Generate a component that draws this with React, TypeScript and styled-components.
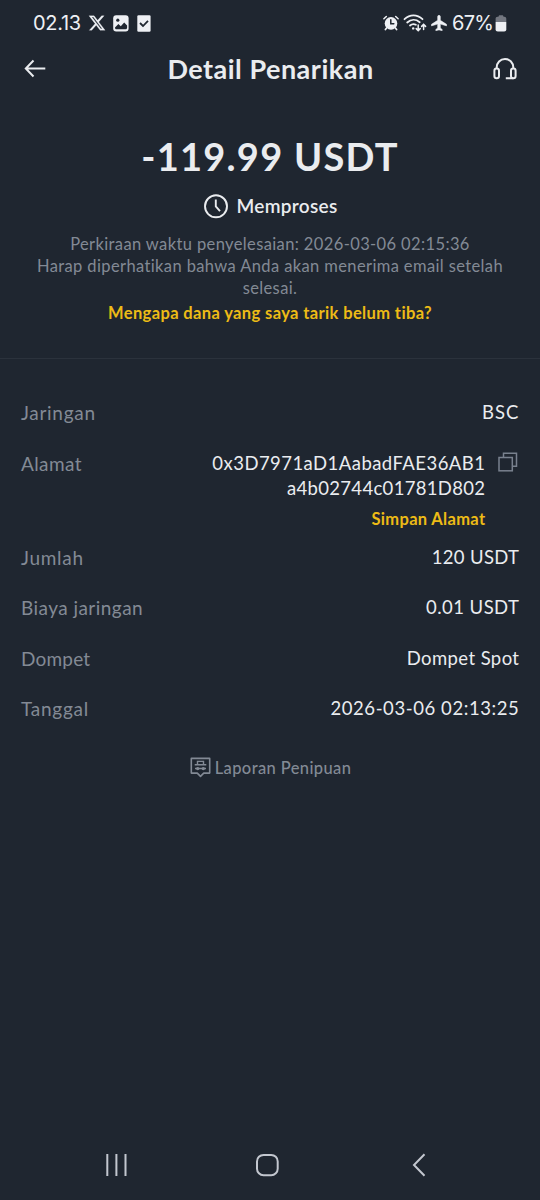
import React from "react";
import styled, { createGlobalStyle } from "styled-components";

const GlobalStyle = createGlobalStyle`
  *, *::before, *::after { box-sizing: border-box; }
  html, body { margin: 0; padding: 0; background: #1f2630; }
  svg { display: block; flex: none; }
`;

const Screen = styled.main`
  display: flex;
  flex-direction: column;
  width: 540px;
  height: 1200px;
  overflow: hidden;
  background: #1f2630;
  color: #eaecef;
  font-family: Lato, "Open Sans", sans-serif;
  font-variant-ligatures: none;
`;

const StatusBar = styled.div`
  display: flex;
  justify-content: space-between;
  align-items: center;
  height: 46px;
  padding: 0 33px 0 33px;
  font-family: Inter, Roboto, sans-serif;
  font-size: 20px;
  line-height: 24px;
  color: #eef0f4;
`;

const StatusGroup = styled.div<{ $gap: number }>`
  display: flex;
  align-items: center;
  gap: ${(p) => p.$gap}px;
`;

const Clock = styled.span`
  letter-spacing: -0.3px;
`;

const BatteryLevel = styled.span`
  margin: 0 -2px 0 1px;
  letter-spacing: -0.8px;
`;

const Header = styled.header`
  display: grid;
  grid-template-columns: 24px 1fr 26px;
  align-items: center;
  height: 46px;
  padding: 0 22px 0 23px;
`;

const IconButton = styled.button`
  display: flex;
  justify-content: center;
  padding: 0;
  border: 0;
  background: none;
  color: inherit;
`;

const Title = styled.h1`
  margin: 0;
  padding-left: 2px;
  text-align: center;
  font-size: 27px;
  line-height: 34px;
  font-weight: 700;
  letter-spacing: 0.5px;
`;

const Summary = styled.section`
  display: flex;
  flex-direction: column;
  align-items: center;
  height: 267px;
  padding: 41px 20px 0;
  border-bottom: 1px solid #2b323c;
`;

const Amount = styled.div`
  font-size: 38px;
  line-height: 46px;
  font-weight: 700;
  letter-spacing: 1.25px;
`;

const Status = styled.div`
  display: flex;
  align-items: center;
  gap: 7px;
  margin-top: 14px;
  padding-left: 1px;
  font-size: 19px;
  line-height: 26px;
  font-weight: 600;
  letter-spacing: 0.3px;
`;

const Note = styled.p`
  width: 490px;
  margin: 14px 0 0;
  text-align: center;
  font-size: 16.5px;
  line-height: 22px;
  letter-spacing: 0.38px;
  color: #838a95;
`;

const HelpLink = styled.a`
  margin-top: 3px;
  font-size: 16.5px;
  line-height: 22px;
  font-weight: 700;
  letter-spacing: 0.38px;
  color: #edbb16;
`;

const Details = styled.dl`
  display: flex;
  flex-direction: column;
  gap: 25.3px;
  margin: 0;
  padding: 41.4px 20.6px 0 21px;
  font-size: 18.5px;
  line-height: 25.3px;
`;

const Row = styled.div`
  display: flex;
  justify-content: space-between;
`;

const Label = styled.dt<{ $tracking: number }>`
  font-size: 19px;
  letter-spacing: ${(p) => p.$tracking}px;
  color: #838a95;
`;

const Value = styled.dd<{ $tracking: number }>`
  margin: 0;
  text-align: right;
  letter-spacing: ${(p) => p.$tracking}px;
`;

const AddressRow = styled(Row)`
  height: 68.4px;
`;

const AddressValue = styled.dd`
  display: flex;
  gap: 13px;
  margin: 0;
`;

const AddressColumn = styled.div`
  display: flex;
  flex-direction: column;
  align-items: flex-end;
`;

const AddressLine = styled.span<{ $tracking: number }>`
  letter-spacing: ${(p) => p.$tracking}px;
`;

const SaveLink = styled.a`
  margin-top: 6px;
  font-size: 16.5px;
  line-height: 22px;
  font-weight: 700;
  letter-spacing: 0.33px;
  color: #edbb16;
`;

const CopySlot = styled.span`
  width: 21px;
  padding-top: 1px;
`;

const Report = styled.button`
  display: flex;
  align-items: center;
  align-self: center;
  gap: 4px;
  margin: 35px 0 0 1px;
  padding: 0;
  border: 0;
  background: none;
  color: #838a95;
  font: 500 16.5px/22px Lato, "Open Sans", sans-serif;
  letter-spacing: 0.38px;
`;

const NavBar = styled.nav`
  display: grid;
  grid-template-columns: 151px 153px 20px;
  align-items: center;
  height: 70px;
  margin-top: auto;
  padding-left: 104px;
  color: #c3c7cf;
`;

const XIcon = () => (
  <svg width="18" height="18" viewBox="0 0 24 24" preserveAspectRatio="none" fill="currentColor" stroke="currentColor" strokeWidth=".3">
    <path d="M18.244 2.25h3.308l-7.227 8.26 8.502 11.24H16.17l-5.214-6.817L4.99 21.75H1.68l7.73-8.835L1.254 2.25H8.08l4.713 6.231zm-1.161 17.52h1.833L7.084 4.126H5.117z" />
  </svg>
);

const GalleryIcon = () => (
  <svg width="16" height="17" viewBox="0 0 16 17">
    <rect x=".2" y=".3" width="15.4" height="16.2" rx="3" fill="currentColor" />
    <circle cx="4.8" cy="5.2" r="1.6" fill="#1f2630" />
    <path d="M2 12.4 5.4 9l2.4 2.2 3.4-3.8 2.9 3v2.4c0 .9-.6 1.5-1.5 1.5H3.400c-.9 0-1.400-.6-1.400-1.500z" fill="#1f2630" />
  </svg>
);

const TaskIcon = () => (
  <svg width="15" height="17" viewBox="-1 0 15 17" fill="none">
    <rect x=".3" y=".3" width="13.3" height="16.4" rx="1.2" fill="currentColor" />
    <path d="m3 8 3 3 5-5.200" stroke="#1f2630" strokeWidth="1.8" />
  </svg>
);

const AlarmIcon = () => (
  <svg width="16" height="16" viewBox="0 0 16 16" fill="none" stroke="currentColor" strokeLinecap="round">
    <circle cx="8" cy="8.400" r="6.300" fill="currentColor" stroke="none" />
    <path d="M.9 3.800 3.300 1.500M15.100 3.800 12.700 1.500" strokeWidth="1.500" />
    <path d="m3.600 13-1.200 1.600M12.400 13l1.200 1.600" strokeWidth="1.700" />
    <path d="M7.800 4.800v4h3" stroke="#1f2630" strokeWidth="1.500" />
  </svg>
);

const WifiIcon = () => (
  <svg width="24" height="18" viewBox="0 0 24 18" fill="none" stroke="currentColor" strokeWidth="1.8" strokeLinecap="round">
    <path d="M1.500 5.200c5.300-5 12.600-5 18 0" />
    <path d="M4.200 8.500c3.800-3.400 8.700-3.400 12.500-.3" />
    <path d="M7 11.500c1.900-1.600 4-1.800 5.900-.7" />
    <circle cx="10.200" cy="14.400" r="1.200" fill="currentColor" stroke="none" />
    <path d="M15.200 11v5.400m-2-1.800 2 2 2-2M20.600 15.600v-5m-2 1.800 2-2 2 2" strokeWidth="1.500" />
  </svg>
);

const PlaneIcon = () => (
  <svg width="16" height="16" viewBox="2 2 20 20" fill="currentColor" stroke="currentColor" strokeWidth=".6">
    <path d="M21.500 15.600v-1.900L13.700 8.700V4c0-1-.8-1.700-1.700-1.700s-1.700.7-1.700 1.700v4.700l-7.800 5v1.900l7.800-2.200v4.900l-2.300 1.700v1.600l4-1 4 1V20l-2.300-1.700v-4.900z" />
  </svg>
);

const BatteryIcon = () => (
  <svg width="12" height="17" viewBox="0 0 12 17">
    <path d="M3.500 1.800c0-.9.500-1.500 1.300-1.500h2.400c.8 0 1.300.6 1.300 1.500h.8c1.200 0 2 .8 2 2V7H.6V3.800c0-1.200.8-2 2-2z" fill="#737780" />
    <path d="M.6 7h10.700v7.300c0 1.400-.8 2.200-2.200 2.200H2.800c-1.400 0-2.200-.8-2.200-2.200z" fill="currentColor" />
  </svg>
);

const BackArrowIcon = () => (
  <svg width="24" height="20" viewBox="0 0 24 20" fill="none" stroke="currentColor" strokeWidth="2">
    <path d="M22.300 9.500H3M10.500 1.500 2.800 9.500l7.700 8" />
  </svg>
);

const HeadsetIcon = () => (
  <svg width="26" height="24" viewBox="0 0 26 24" fill="none" stroke="currentColor" strokeWidth="2">
    <rect x="2.400" y="11.500" width="4.600" height="9.800" rx="2.200" />
    <rect x="19" y="11.500" width="4.600" height="9.800" rx="2.200" />
    <path d="M4.700 11.500v-1C4.700 5.700 8.200 2 13 2s8.300 3.700 8.300 8.500v1M21.300 21.300H13.800" />
  </svg>
);

const ClockIcon = () => (
  <svg width="26" height="26" viewBox="0 0 26 26" fill="none" stroke="currentColor" strokeWidth="1.900">
    <circle cx="13" cy="13.300" r="11" />
    <path d="M12.800 6.500v7l4.200 4.700" />
  </svg>
);

const CopyIcon = () => (
  <svg width="20" height="20" viewBox="0 0 20 20" fill="none" stroke="#79818e" strokeWidth="1.500">
    <rect x="1" y="5.500" width="13.300" height="13.300" />
    <path d="M5.500 5.500V1.200h13v13.100h-4.200" />
  </svg>
);

const ReportIcon = () => (
  <svg width="21" height="21" viewBox="0 0 21 21" fill="none" stroke="currentColor" strokeWidth="1.600">
    <path d="M1.300 1.400h18.400v14.700h-6l-3.200 3.300-3.200-3.300h-6z" strokeLinejoin="round" />
    <path d="M7.500 7.500V4.400h6v3.100M4.700 7.800h11.600M5 11.500h11" strokeWidth="1.400" />
    <circle cx="7.700" cy="11.600" r="1.700" fill="currentColor" stroke="none" />
    <circle cx="13.300" cy="11.600" r="1.700" fill="currentColor" stroke="none" />
  </svg>
);

const RecentsIcon = () => (
  <svg width="24" height="24" viewBox="0 0 24 24" stroke="currentColor" strokeWidth="2">
    <path d="M3.300 1v22M12.400 1v22M21.500 1v22" />
  </svg>
);

const HomeIcon = () => (
  <svg width="24" height="24" viewBox="0 0 24 24" fill="none" stroke="currentColor" strokeWidth="2">
    <rect x="2" y="1.900" width="20.700" height="20.300" rx="6.500" />
  </svg>
);

const NavBackIcon = () => (
  <svg width="20" height="24" viewBox="0 0 20 24" fill="none" stroke="currentColor" strokeWidth="2">
    <path d="M16.500 1.200 6 12l10.500 10.800" />
  </svg>
);

type Detail = { label: string; value: string; labelTracking: number; valueTracking: number };

const network: Detail = { label: "Jaringan", value: "BSC", labelTracking: 0.7, valueTracking: 1 };

const details: Detail[] = [
  { label: "Jumlah", value: "120 USDT", labelTracking: 0.7, valueTracking: 0.35 },
  { label: "Biaya jaringan", value: "0.01 USDT", labelTracking: 0.45, valueTracking: 0.45 },
  { label: "Dompet", value: "Dompet Spot", labelTracking: 0.2, valueTracking: 0.4 },
  { label: "Tanggal", value: "2026-03-06 02:13:25", labelTracking: 0.75, valueTracking: 0.58 },
];

const DetailRow = ({ label, value, labelTracking, valueTracking }: Detail) => (
  <Row>
    <Label $tracking={labelTracking}>{label}</Label>
    <Value $tracking={valueTracking}>{value}</Value>
  </Row>
);

export default function App() {
  return (
    <>
      <GlobalStyle />
      <Screen>
        <StatusBar>
          <StatusGroup $gap={7}>
            <Clock>02.13</Clock>
            <XIcon />
            <GalleryIcon />
            <TaskIcon />
          </StatusGroup>
          <StatusGroup $gap={4}>
            <AlarmIcon />
            <WifiIcon />
            <PlaneIcon />
            <BatteryLevel>67%</BatteryLevel>
            <BatteryIcon />
          </StatusGroup>
        </StatusBar>

        <Header>
          <IconButton aria-label="Kembali"><BackArrowIcon /></IconButton>
          <Title>Detail Penarikan</Title>
          <IconButton aria-label="Bantuan"><HeadsetIcon /></IconButton>
        </Header>

        <Summary>
          <Amount>-119.99 USDT</Amount>
          <Status>
            <ClockIcon />
            Memproses
          </Status>
          <Note>
            Perkiraan waktu penyelesaian: 2026-03-06 02:15:36
            <br />
            Harap diperhatikan bahwa Anda akan menerima email setelah selesai.
          </Note>
          <HelpLink>Mengapa dana yang saya tarik belum tiba?</HelpLink>
        </Summary>

        <Details>
          <DetailRow {...network} />
          <AddressRow>
            <Label $tracking={0.4}>Alamat</Label>
            <AddressValue>
              <AddressColumn>
                <AddressLine $tracking={0.45}>0x3D7971aD1AabadFAE36AB1</AddressLine>
                <AddressLine $tracking={0.32}>a4b02744c01781D802</AddressLine>
                <SaveLink>Simpan Alamat</SaveLink>
              </AddressColumn>
              <CopySlot><CopyIcon /></CopySlot>
            </AddressValue>
          </AddressRow>
          {details.map((detail) => (
            <DetailRow key={detail.label} {...detail} />
          ))}
        </Details>

        <Report>
          <ReportIcon />
          Laporan Penipuan
        </Report>

        <NavBar>
          <RecentsIcon />
          <HomeIcon />
          <NavBackIcon />
        </NavBar>
      </Screen>
    </>
  );
}
